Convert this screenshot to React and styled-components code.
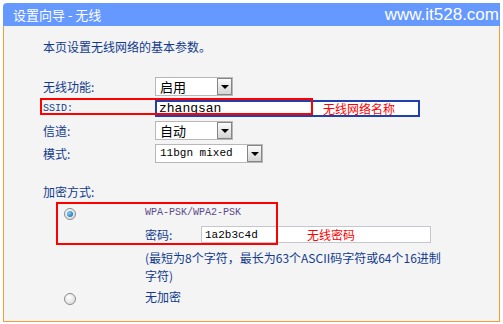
import React from 'react';
import styled, { createGlobalStyle } from 'styled-components';

const GlobalStyle = createGlobalStyle`
  body {
    margin: 0;
    background: #fff;
    font-family: "Noto Sans CJK SC", "Liberation Sans", sans-serif;
  }
`;

const Frame = styled.div`
  margin: 3px 0 0 3px;
  width: 497px;
`;

const Header = styled.div`
  height: 23px;
  background: #6699ff;
  border-top-left-radius: 4px;
  display: flex;
  align-items: center;
  justify-content: space-between;
  padding: 0 1px 0 10px;
  color: #fff;
`;

const Title = styled.span`
  font-size: 13px;
  line-height: 16px;
`;

const Site = styled.span`
  font-family: "Liberation Sans", Arial, sans-serif;
  font-size: 17px;
  line-height: 20px;
`;

const Panel = styled.div`
  box-sizing: border-box;
  height: 296px;
  background: #f4f4f4;
  border: 1px solid #f79a38;
  border-top: none;
  padding: 13px 0 0 39px;
  color: #123b8e;
  font-size: 12px;
`;

const Intro = styled.div`
  line-height: 16px;
`;

const Form = styled.div`
  display: flex;
  flex-direction: column;
  gap: 4px;
  margin-top: 22px;
`;

const Row = styled.div`
  position: relative;
  display: grid;
  grid-template-columns: 112px auto;
  align-items: center;
`;

const Label = styled.span`
  line-height: 16px;
  font-family: ${(p) => (p.$mono ? '"Liberation Mono", monospace' : 'inherit')};
  font-size: ${(p) => (p.$mono ? '10px' : '12px')};
`;

const Select = styled.div`
  box-sizing: border-box;
  width: ${(p) => p.$width}px;
  height: 19px;
  border: 1px solid #b8b8b8;
  background: #fff;
  display: flex;
  align-items: center;
  justify-content: space-between;
  padding-left: 4px;
  color: #000;
  font-size: ${(p) => (p.$mono ? '11px' : '13px')};
  font-family: ${(p) => (p.$mono ? '"Liberation Mono", monospace' : 'inherit')};
  line-height: 17px;
`;

const DropButton = styled.span`
  box-sizing: border-box;
  width: 15px;
  height: 17px;
  border: 1px solid #858585;
  background: linear-gradient(#fbfbfb, #d4d4d4);
  display: flex;
  align-items: center;
  justify-content: center;

  &::after {
    content: '';
    border-left: 4px solid transparent;
    border-right: 4px solid transparent;
    border-top: 4px solid #000;
  }
`;

const TextBox = styled.div`
  box-sizing: border-box;
  width: ${(p) => p.$width}px;
  height: 17px;
  background: #fff;
  border: ${(p) => (p.$strong ? '2px solid #1f40ad' : '1px solid #c6c6ce')};
  display: flex;
  align-items: center;
  padding-left: ${(p) => (p.$strong ? '2px' : '3px')};
`;

const Value = styled.span`
  width: ${(p) => p.$width}px;
  font-family: "Liberation Mono", monospace;
  font-size: ${(p) => (p.$size || 11)}px;
  color: #000;
  line-height: 14px;
`;

const Note = styled.span`
  color: #ff0000;
  font-size: 12px;
  line-height: 14px;
`;

const Mark = styled.div`
  position: absolute;
  left: ${(p) => p.$left}px;
  top: ${(p) => p.$top}px;
  width: ${(p) => p.$width}px;
  height: ${(p) => p.$height}px;
  border: 2px solid #ff0000;
  box-sizing: border-box;
  pointer-events: none;
`;

const Section = styled.div`
  margin-top: 21px;
  line-height: 16px;
`;

const Option = styled.div`
  position: relative;
  display: grid;
  grid-template-columns: 102px auto;
  margin-top: 4px;
`;

const Radio = styled.span`
  box-sizing: border-box;
  margin: ${(p) => p.$offset}px 0 0 21px;
  width: 12px;
  height: 12px;
  border-radius: 50%;
  border: 1px solid #8c8c8c;
  background: radial-gradient(circle at 40% 35%, #ffffff, #d2d2d2);
  display: flex;
  align-items: center;
  justify-content: center;

  &::after {
    content: '';
    display: ${(p) => (p.$checked ? 'block' : 'none')};
    width: 6px;
    height: 6px;
    border-radius: 50%;
    background: radial-gradient(circle at 35% 35%, #7fd0ff, #0b5b9e);
  }
`;

const OptionBody = styled.div`
  display: flex;
  flex-direction: column;
`;

const Mode = styled.span`
  height: 18px;
  line-height: 18px;
  font-family: "Liberation Mono", monospace;
  font-size: 10px;
  color: #5b4b8c;
`;

const PassRow = styled.div`
  display: grid;
  grid-template-columns: 56px auto;
  align-items: center;
  margin-top: 4px;
`;

const Hint = styled.div`
  margin-top: 6px;
  line-height: 18px;
  white-space: nowrap;
`;

export default function App() {
  return (
    <>
      <GlobalStyle />
      <Frame>
        <Header>
          <Title>设置向导 - 无线</Title>
          <Site>www.it528.com</Site>
        </Header>
        <Panel>
          <Intro>本页设置无线网络的基本参数。</Intro>
          <Form>
            <Row>
              <Label>无线功能:</Label>
              <Select $width={78}>
                启用
                <DropButton />
              </Select>
            </Row>
            <Row>
              <Label $mono>SSID:</Label>
              <TextBox $width={265} $strong>
                <Value $width={164} $size={13}>zhangsan</Value>
                <Note>无线网络名称</Note>
              </TextBox>
              <Mark $left={-3} $top={-2} $width={273} $height={17} />
            </Row>
            <Row>
              <Label>信道:</Label>
              <Select $width={78}>
                自动
                <DropButton />
              </Select>
            </Row>
            <Row>
              <Label>模式:</Label>
              <Select $width={108} $mono>
                11bgn mixed
                <DropButton />
              </Select>
            </Row>
          </Form>
          <Section>
            加密方式:
            <Option>
              <Radio $checked $offset={4} />
              <OptionBody>
                <Mode>WPA-PSK/WPA2-PSK</Mode>
                <PassRow>
                  <span>密码:</span>
                  <TextBox $width={230}>
                    <Value $width={102}>1a2b3c4d</Value>
                    <Note>无线密码</Note>
                  </TextBox>
                </PassRow>
                <Hint>
                  (最短为8个字符，最长为63个ASCII码字符或64个16进制
                  <br />
                  字符)
                </Hint>
              </OptionBody>
              <Mark $left={13} $top={-2} $width={222} $height={43} />
            </Option>
            <Option>
              <Radio $offset={4} />
              <span>无加密</span>
            </Option>
          </Section>
        </Panel>
      </Frame>
    </>
  );
}
